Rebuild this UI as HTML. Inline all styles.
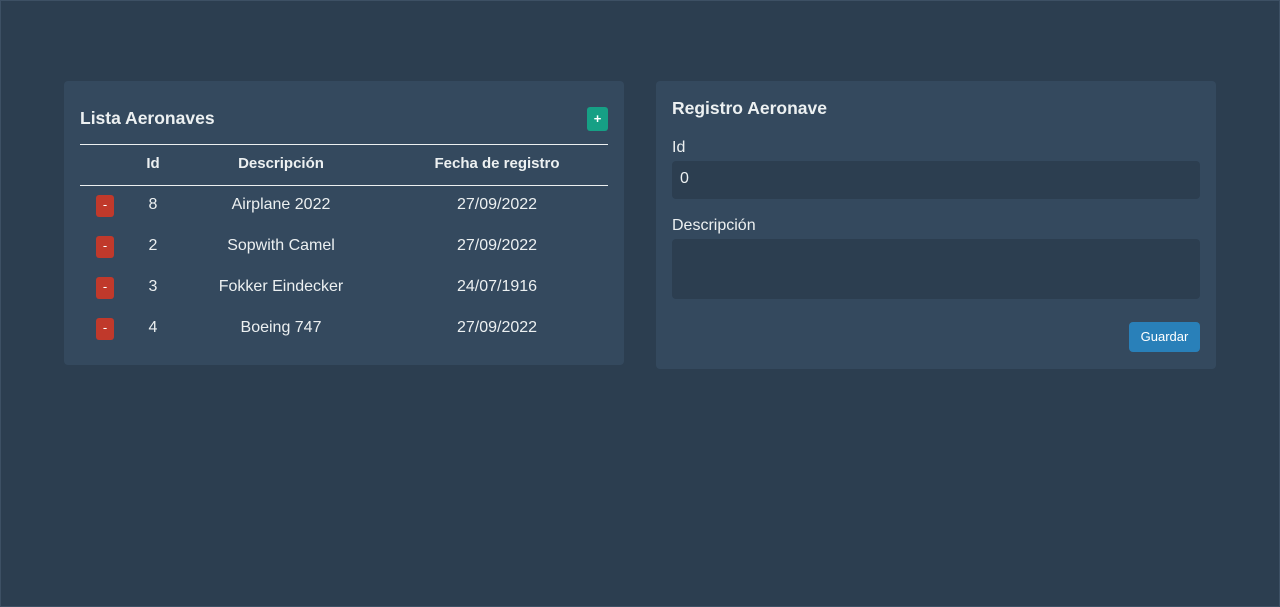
<!DOCTYPE html>
<html><head><meta charset="utf-8"><style>
*{box-sizing:border-box;margin:0;padding:0}
body{width:1280px;height:607px;background:#2c3e50;font-family:"Liberation Sans",sans-serif;color:#ecf0f1;position:relative;overflow:hidden;box-shadow:inset 0 0 0 1px #3d5064}
.p{position:absolute;background:#34495e;border-radius:4px}
.a{position:absolute;white-space:nowrap}
.c{transform:translateX(-50%)}
.line{position:absolute;left:16px;width:528px;height:1px;background:#ecf0f1}
.del{position:absolute;left:32px;width:18px;height:22px;background:#c0392b;border-radius:3px;color:#fff;font-size:13px;text-align:center;line-height:20px}
.t{font-size:16px}
</style></head><body>
<div class="p" style="left:64px;top:81px;width:560px;height:284px">
 <div class="a" style="left:16px;top:27px;font-size:17.5px;font-weight:bold">Lista Aeronaves</div>
 <div class="a" style="left:523px;top:26px;width:21px;height:24px;background:#16a085;border-radius:3px;color:#fff;font-size:13px;font-weight:bold;text-align:center;line-height:23px">+</div>
 <div class="line" style="top:63px"></div>
 <div class="a c t" style="left:89px;top:74px;font-weight:bold;font-size:15px">Id</div>
 <div class="a c t" style="left:217px;top:74px;font-weight:bold;font-size:15px">Descripción</div>
 <div class="a c t" style="left:433px;top:74px;font-weight:bold;font-size:15px">Fecha de registro</div>
 <div class="line" style="top:104px"></div>
 <div class="del" style="top:114px">-</div><div class="a c t" style="left:89px;top:115px">8</div><div class="a c t" style="left:217px;top:115px">Airplane 2022</div><div class="a c t" style="left:433px;top:115px">27/09/2022</div>
 <div class="del" style="top:155px">-</div><div class="a c t" style="left:89px;top:156px">2</div><div class="a c t" style="left:217px;top:156px">Sopwith Camel</div><div class="a c t" style="left:433px;top:156px">27/09/2022</div>
 <div class="del" style="top:196px">-</div><div class="a c t" style="left:89px;top:197px">3</div><div class="a c t" style="left:217px;top:197px">Fokker Eindecker</div><div class="a c t" style="left:433px;top:197px">24/07/1916</div>
 <div class="del" style="top:237px">-</div><div class="a c t" style="left:89px;top:238px">4</div><div class="a c t" style="left:217px;top:238px">Boeing 747</div><div class="a c t" style="left:433px;top:238px">27/09/2022</div>
</div>
<div class="p" style="left:656px;top:81px;width:560px;height:288px">
 <div class="a" style="left:16px;top:17px;font-size:17.5px;font-weight:bold">Registro Aeronave</div>
 <div class="a t" style="left:16px;top:58px">Id</div>
 <div class="a" style="left:16px;top:80px;width:528px;height:38px;background:#2c3e50;border-radius:4px;padding:9px 8px;font-size:16px">0</div>
 <div class="a t" style="left:16px;top:136px">Descripción</div>
 <div class="a" style="left:16px;top:158px;width:528px;height:60px;background:#2c3e50;border-radius:4px"></div>
 <div class="a" style="left:473px;top:241px;width:71px;height:30px;background:#2980b9;border-radius:4px;color:#fff;font-size:13px;text-align:center;line-height:30px">Guardar</div>
</div>
</body></html>
